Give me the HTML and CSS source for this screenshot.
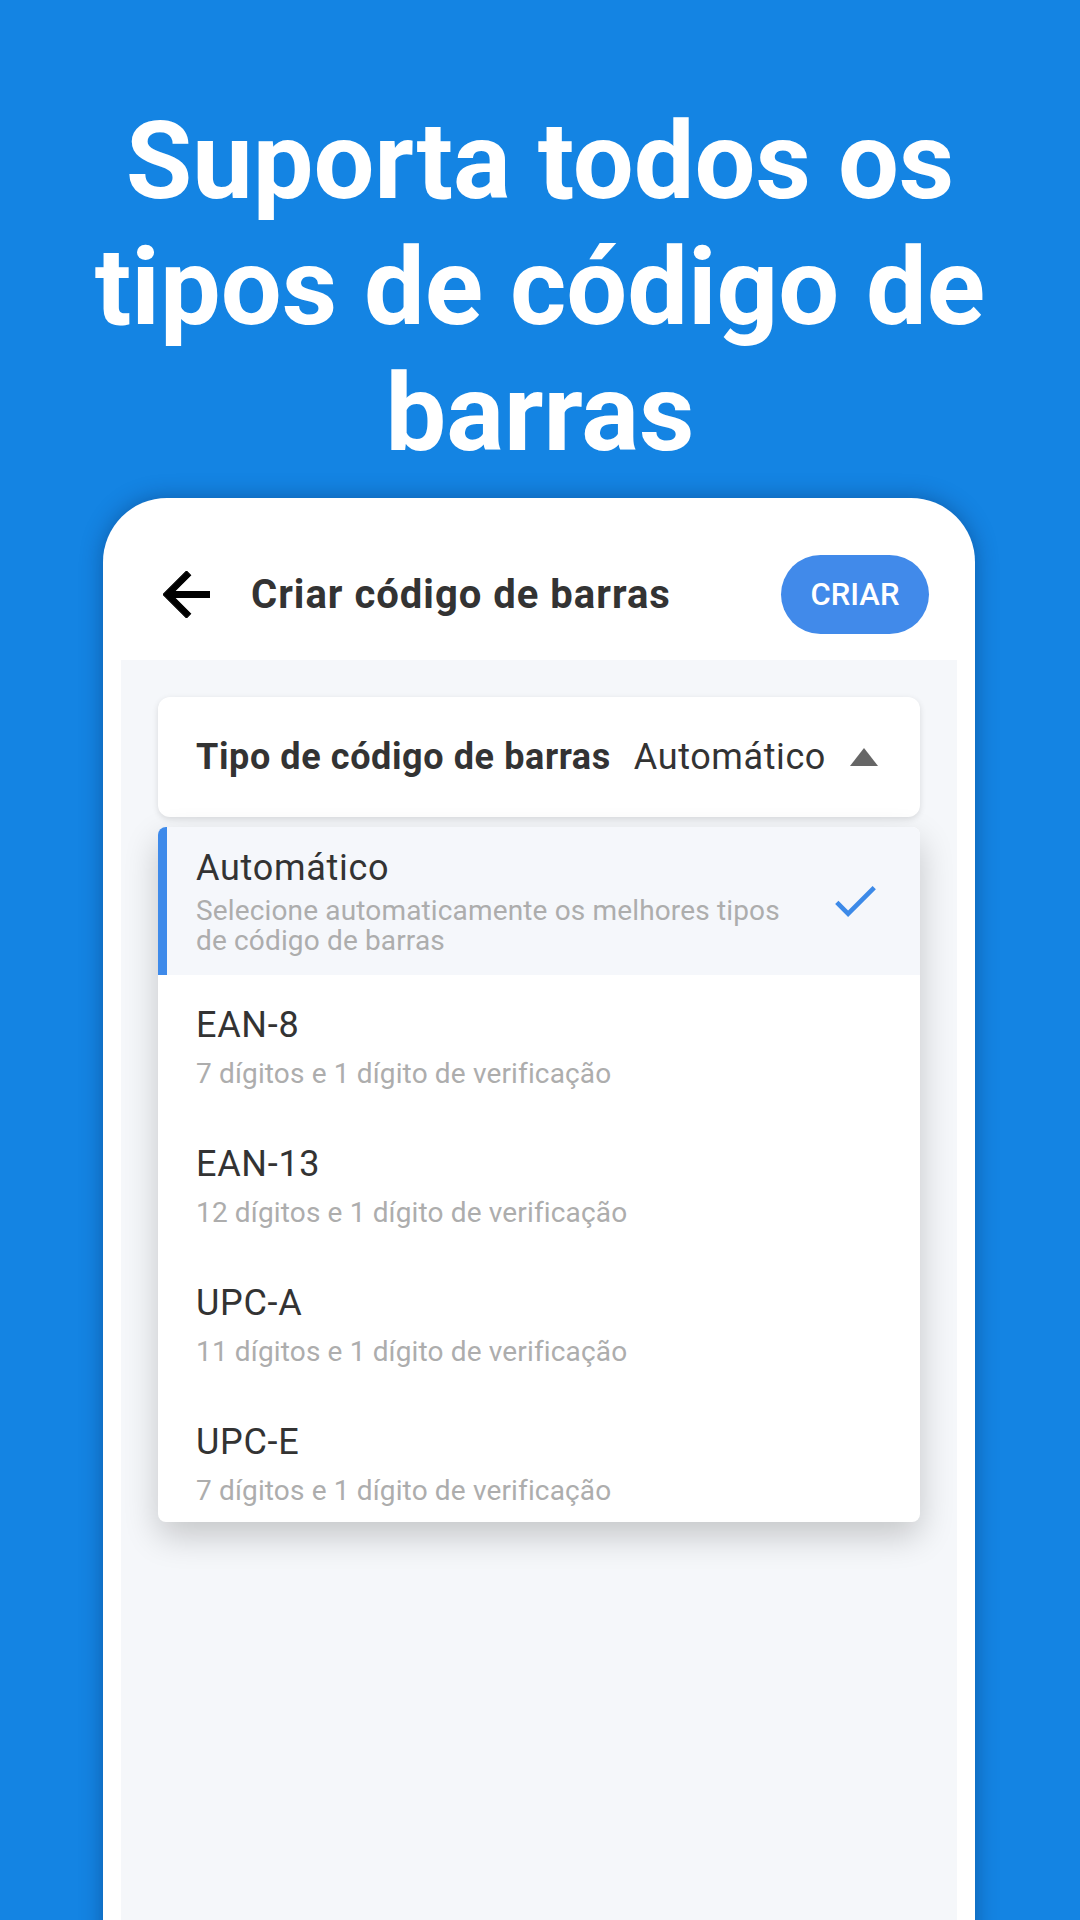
FILE: index.html
```html
<!DOCTYPE html>
<html lang="pt">
    <head>
        <meta charset="UTF-8">
        <meta name="viewport" content="width=device-width, initial-scale=1.0">
        <title>Criar código de barras</title>
        <link rel="stylesheet" href="styles.css">
    </head>
<body>
    <h1 class="headline">Suporta todos os tipos de código de barras</h1>

    <div class="phone">
        <div class="app-bar">
            <svg class="back" width="47" height="47" viewBox="4 4 16 16">
                <path d="M20 11H7.83l5.59-5.59L12 4l-8 8 8 8 1.41-1.41L7.83 13H20v-2z" fill="#000" stroke="#000" stroke-width="0.35"/>
            </svg>
            <div class="app-title">Criar código de barras</div>
            <button class="create-btn">CRIAR</button>
        </div>

        <div class="screen">
            <div class="select-box">
                <span class="select-label">Tipo de código de barras</span>
                <span class="select-value">Automático</span>
                <span class="triangle"></span>
            </div>

            <div class="options">
                <div class="option option-active">
                    <div class="option-text">
                        <div class="option-name">Automático</div>
                        <div class="option-desc">Selecione automaticamente os melhores tipos de código de barras</div>
                    </div>
                    <svg class="check" width="41" height="31" viewBox="3.4 5.6 17.6 13.4">
                        <path d="M9 16.17L4.83 12l-1.42 1.41L9 19 21 7l-1.41-1.41z" fill="#3d8ae8"/>
                    </svg>
                </div>
                <div class="option">
                    <div class="option-text">
                        <div class="option-name">EAN-8</div>
                        <div class="option-desc">7 dígitos e 1 dígito de verificação</div>
                    </div>
                </div>
                <div class="option">
                    <div class="option-text">
                        <div class="option-name">EAN-13</div>
                        <div class="option-desc">12 dígitos e 1 dígito de verificação</div>
                    </div>
                </div>
                <div class="option">
                    <div class="option-text">
                        <div class="option-name">UPC-A</div>
                        <div class="option-desc">11 dígitos e 1 dígito de verificação</div>
                    </div>
                </div>
                <div class="option">
                    <div class="option-text">
                        <div class="option-name">UPC-E</div>
                        <div class="option-desc">7 dígitos e 1 dígito de verificação</div>
                    </div>
                </div>
            </div>
        </div>
    </div>
</body>
</html>
```

FILE: styles.css
```css
html, body {
    margin: 0;
    height: 1920px;
    overflow: hidden;
}
body {
    background-color: #1484e3;
    font-family: Roboto, "Noto Sans", sans-serif;
}
.headline {
    margin: 0;
    padding: 98px 60px 0;
    color: #fff;
    font-size: 108px;
    line-height: 126px;
    font-weight: 700;
    text-align: center;
}
.phone {
    margin: 22px 0 0 103px;
    width: 836px;
    height: 1500px;
    padding: 0 18px;
    background: #fff;
    border-radius: 64px 64px 0 0;
    box-shadow: 0 0 22px rgba(0, 20, 60, 0.35);
}
.app-bar {
    display: flex;
    align-items: center;
    height: 132px;
    padding: 30px 28px 0 42px;
}
.back {
    flex-shrink: 0;
}
.app-title {
    margin-left: 41px;
    font-size: 40px;
    letter-spacing: 1px;
    font-weight: 700;
    color: #333;
}
.create-btn {
    margin-left: auto;
    width: 148px;
    height: 79px;
    border: none;
    border-radius: 40px;
    background-color: #418aea;
    color: #fff;
    font-family: Roboto, sans-serif;
    font-size: 31px;
    font-weight: 500;
}
.screen {
    background-color: #f5f7fa;
    height: 1300px;
    padding: 37px 37px 0;
}
.select-box {
    display: flex;
    align-items: center;
    height: 120px;
    padding: 0 42px 0 38px;
    background: #fff;
    border-radius: 12px;
    box-shadow: 0 2px 6px rgba(0, 0, 0, 0.12);
    font-size: 36px;
    letter-spacing: 0.6px;
    color: #333;
}
.select-label {
    font-weight: 700;
}
.select-value {
    margin-left: auto;
    margin-right: 24px;
}
.triangle {
    width: 0;
    height: 0;
    border-left: 14px solid transparent;
    border-right: 14px solid transparent;
    border-bottom: 18px solid #666;
}
.options {
    margin-top: 10px;
    height: 695px;
    overflow: hidden;
    background: #fff;
    border-radius: 8px;
    box-shadow: 0 14px 34px rgba(0, 0, 0, 0.2);
}
.option {
    display: flex;
    align-items: center;
    height: 139px;
    box-sizing: border-box;
    padding: 0 44px 0 38px;
}
.option-text {
    width: 610px;
    align-self: flex-start;
    padding-top: 29px;
}
.option-name {
    font-size: 36px;
    line-height: 42px;
    letter-spacing: 0.7px;
    color: #333;
}
.option-desc {
    margin-top: 13px;
    font-size: 28px;
    line-height: 30px;
    letter-spacing: 0.15px;
    color: #adadad;
}
.option-active {
    height: 148px;
    padding-left: 29px;
    border-left: 9px solid #3e8aea;
    background-color: #f5f7fb;
}
.option-active .option-text {
    padding-top: 20px;
}
.option-active .option-desc {
    margin-top: 7px;
}
.check {
    margin-left: auto;
}
```
